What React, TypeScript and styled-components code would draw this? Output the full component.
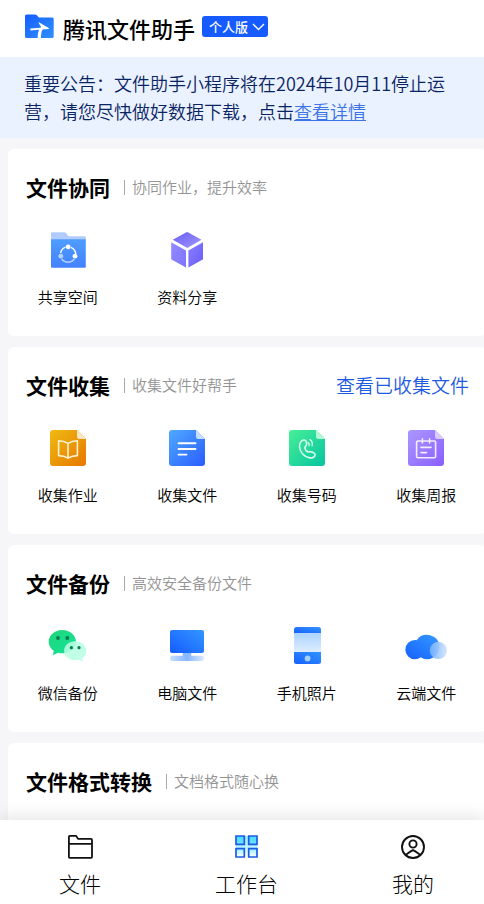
import React from 'react';
import styled, { createGlobalStyle } from 'styled-components';

const GlobalStyle = createGlobalStyle`
  * { box-sizing: border-box; }
  body {
    margin: 0;
    background: #f6f6f8;
    color: #000;
    font-family: "Noto Sans CJK SC", "Noto Sans", sans-serif;
    font-weight: 300;
  }
  button { font: inherit; color: inherit; border: 0; padding: 0; background: none; cursor: pointer; }
  svg { display: block; flex: none; }
`;

const Page = styled.div`
  display: flex;
  flex-direction: column;
  height: 100vh;
  overflow: hidden;
`;

const Header = styled.header`
  display: flex;
  align-items: center;
  height: 57px;
  padding: 0 24px 4px;
  background: #fff;
`;

const Brand = styled.h1`
  margin: 0 7px 0 8px;
  font-size: 22px;
  line-height: 32px;
  font-weight: 500;
  padding-top: 2px;
`;

const EditionButton = styled.button`
  && {
    display: flex;
    align-items: center;
    gap: 4px;
    height: 21px;
    padding: 0 3px 0 7px;
    border-radius: 3px;
    background: #155bff;
    color: #fff;
    font-size: 13px;
    line-height: 19px;
    font-weight: 500;
  }
`;

const Notice = styled.p`
  margin: 0;
  padding: 12px 24px 13px;
  background: #eaf2ff;
  color: #0a2463;
  font-size: 18px;
  line-height: 28px;
  font-weight: 350;
`;

const NoticeLink = styled.a`
  color: #3d73e6;
  text-decoration: underline;
`;

const Content = styled.main`
  flex: 1;
  min-height: 0;
  overflow: hidden auto;
  scrollbar-width: none;
  display: flex;
  flex-direction: column;
  gap: 11px;
  padding: 11px 0 11px 8px;
`;

const Card = styled.section`
  flex: none;
  min-height: 187px;
  margin-right: -2px;
  padding: 23px 0 29px;
  border-radius: 6px;
  background: #fff;
`;

const CardHead = styled.div`
  display: flex;
  align-items: center;
  height: 30px;
  padding: 0 17px 0 18px;
`;

const CardTitle = styled.h2`
  margin: 0;
  font-size: 21px;
  line-height: 30px;
  font-weight: 700;
`;

const CardHint = styled.span`
  display: flex;
  align-items: center;
  gap: 7px;
  margin-left: 14px;
  color: #949494;
  font-size: 15px;
  line-height: 24px;
  font-weight: 350;
  &::before {
    content: "";
    width: 1px;
    height: 15px;
    background: #aaa;
  }
`;

const HeadLink = styled.a`
  margin-left: auto;
  color: #1f5be0;
  font-size: 19px;
  line-height: 28px;
  font-weight: 350;
  text-decoration: none;
`;

const Grid = styled.div`
  display: grid;
  grid-template-columns: repeat(4, 1fr);
  margin-top: 26px;
`;

const Item = styled.button`
  display: flex;
  flex-direction: column;
  align-items: center;
  gap: 15px;
`;

const ItemLabel = styled.span`
  font-size: 15px;
  line-height: 20px;
  font-weight: 350;
`;

const TabBar = styled.nav`
  position: relative;
  display: flex;
  justify-content: space-between;
  padding: 13px 50px 7px 59px;
  background: #fff;
  box-shadow: 0 -4px 16px rgba(0, 0, 0, 0.1);
`;

const Tab = styled.button`
  display: flex;
  flex-direction: column;
  align-items: center;
  gap: 8px;
`;

const TabLabel = styled.span`
  font-size: 21px;
  line-height: 28px;
`;

type Stop = [string, string];

function Gradient({ id, stops, flip }: { id: string; stops: Stop; flip?: boolean }) {
  return (
    <linearGradient id={id} x1="0" y1={flip ? '1' : '0'} x2="1" y2={flip ? '0' : '1'}>
      <stop stopColor={stops[0]} />
      <stop offset="1" stopColor={stops[1]} />
    </linearGradient>
  );
}

function Icon({ children }: { children: React.ReactNode }) {
  return (
    <svg width="44" height="44" viewBox="0 0 44 44" fill="none" aria-hidden="true">
      {children}
    </svg>
  );
}

function SharedSpaceIcon() {
  return (
    <Icon>
      <defs>
        <linearGradient id="space" x1="0" y1="0" x2="0" y2="1">
          <stop stopColor="#4f9dff" />
          <stop offset="1" stopColor="#4382ff" />
        </linearGradient>
      </defs>
      <path d="M5 5.3a1 1 0 0 1 1-1h12.500a2 2 0 0 1 1.500.7l2.500 3.300h16.300a1 1 0 0 1 1 1V14H5z" fill="#b2ccff" />
      <path d="M5 11.300h34.800v27.400a1 1 0 0 1-1 1H6a1 1 0 0 1-1-1z" fill="url(#space)" />
      <path d="M14.600 25a8 8 0 0 1 4.900-5.800M24.900 19.300a8 8 0 0 1 4.900 6.800" stroke="#fff" strokeWidth="1.400" />
      <path d="M15.600 31a8 8 0 0 0 12.800 0" stroke="#fff" strokeOpacity=".6" strokeWidth="1.400" />
      <circle cx="22.200" cy="18.800" r="2.400" fill="#fff" />
      <circle cx="29" cy="28.200" r="2.400" fill="#fff" />
      <circle cx="14.800" cy="28.200" r="2.400" fill="#fff" fillOpacity=".6" />
    </Icon>
  );
}

function CubeIcon() {
  return (
    <Icon>
      <defs>
        <Gradient id="cubeTop" stops={['#655cf2', '#a398ff']} />
        <Gradient id="cubeLeft" stops={['#928aff', '#7f74ff']} />
        <Gradient id="cubeRight" stops={['#8a7fff', '#6a5cf8']} />
      </defs>
      <path d="M21.400 4.300a1.400 1.400 0 0 1 1.400 0l13.700 7.500-14.200 8.100-14.500-8.100z" fill="url(#cubeTop)" />
      <path d="M6.200 14.200 21 22.400v17L6.900 31.800a1.300 1.300 0 0 1-.7-1.100z" fill="url(#cubeLeft)" />
      <path d="m38 14.200-14.600 8.200v17l13.900-7.600a1.300 1.300 0 0 0 .7-1.100z" fill="url(#cubeRight)" />
    </Icon>
  );
}

function SheetIcon({ id, stops, fold, children }: { id: string; stops: Stop; fold: string; children: React.ReactNode }) {
  return (
    <Icon>
      <defs>
        <Gradient id={id} stops={stops} />
      </defs>
      <path d="M7 4h24l9 9v24a3 3 0 0 1-3 3H7a3 3 0 0 1-3-3V7a3 3 0 0 1 3-3z" fill={`url(#${id})`} />
      <path d="M31 4l9 9h-6.500a2.500 2.500 0 0 1-2.500-2.500z" fill={fold} />
      {children}
    </Icon>
  );
}

function HomeworkIcon() {
  return (
    <SheetIcon id="homework" stops={['#efbb12', '#e67700']} fold="#fbe6c4">
      <path
        d="M22 17.400c-2.800-1.800-6-2.500-9.400-2.600v14.800c3.500 0 6.600.8 9.400 2.600 2.800-1.800 6-2.600 9.400-2.600V14.800c-3.400.1-6.600.8-9.400 2.600zm0 0v14.600"
        stroke="#fff2cf"
        strokeWidth="1.600"
        strokeLinejoin="round"
      />
    </SheetIcon>
  );
}

function CollectFileIcon() {
  return (
    <SheetIcon id="collectFile" stops={['#4faaff', '#2a5cff']} fold="#c4dfff">
      <path d="M13.500 17.300h17M13.500 23h17M13.500 28.600h8" stroke="#fff" strokeWidth="1.900" strokeLinecap="round" />
    </SheetIcon>
  );
}

function NumberIcon() {
  return (
    <SheetIcon id="number" stops={['#46f096', '#08c3a0']} fold="#b5f8d5">
      <path
        d="M19.600 14c1.700.4 2.400 3 1.700 5.300-.3 1-1.500 1.500-1.400 2.500.2 1.700 1.500 3.200 2.900 4 1 .6 1.900-.3 2.900-.1 2.100.4 4.300 1.500 4.400 3.100.1 2-2.700 3.400-5.200 3.100-5.400-.7-9.900-5.300-10.400-11.200-.3-3.400 2-7.300 5.100-6.700z"
        stroke="#d8fff0"
        strokeWidth="1.600"
      />
      <path d="M22.900 16.600c1.100.6 1.500 1.800 1.300 3.100M25 13.600c2 1.300 2.700 3.600 2.100 6" stroke="#d8fff0" strokeWidth="1.300" strokeLinecap="round" />
    </SheetIcon>
  );
}

function WeeklyIcon() {
  return (
    <SheetIcon id="weekly" stops={['#ab98ff', '#8a5eff']} fold="#dccbff">
      <rect x="12.600" y="15" width="19" height="16.800" rx="1.200" stroke="#f2ecff" strokeWidth="1.600" />
      <path d="M18.400 12.800v4.200M25.600 12.800v4.200M17 21.400h10M17 26.600h5.500" stroke="#f2ecff" strokeWidth="1.600" strokeLinecap="round" />
    </SheetIcon>
  );
}

function ChatIcon() {
  return (
    <Icon>
      <defs>
        <Gradient id="chatBack" stops={['#1ed67a', '#16e39a']} />
      </defs>
      <path d="M16.300 6C8.700 6 2.700 11.200 2.700 17.800c0 3.700 1.900 6.800 5 9L7 31.200l5-2.500c1.400.4 2.800.6 4.300.6 7.600 0 13.700-5 13.700-11.500S23.900 6 16.300 6z" fill="url(#chatBack)" />
      <path d="M29.200 17.200c-6.200 0-11.100 4.200-11.100 9.500s4.900 9.600 11.100 9.600c1.400 0 2.700-.2 3.900-.5l3.700 1.900-.6-3.500c2.600-1.800 4.200-4.500 4.200-7.500 0-5.300-5-9.500-11.200-9.500z" fill="#b8ffe4" fillOpacity=".88" />
      <circle cx="12" cy="14" r="1.900" fill="#087a4c" />
      <circle cx="21.300" cy="14" r="1.900" fill="#087a4c" />
      <circle cx="25.400" cy="23.700" r="1.600" fill="#087a4c" />
      <circle cx="33" cy="23.700" r="1.600" fill="#087a4c" />
    </Icon>
  );
}

function ComputerIcon() {
  return (
    <Icon>
      <defs>
        <Gradient id="screen" stops={['#155cff', '#3396ff']} flip />
        <linearGradient id="stand" x1="0" y1="0" x2="1" y2="0">
          <stop stopColor="#c9deff" />
          <stop offset=".5" stopColor="#86b6ff" />
          <stop offset="1" stopColor="#dbe9ff" />
        </linearGradient>
      </defs>
      <path d="M17.700 28h8.500v5h-8.500z" fill="#8bb8ff" />
      <rect x="5" y="31.700" width="34" height="5.400" rx="2.300" fill="url(#stand)" />
      <rect x="5" y="6" width="34" height="23" rx="2" fill="url(#screen)" />
    </Icon>
  );
}

function MobileIcon() {
  return (
    <Icon>
      <defs>
        <Gradient id="mobile" stops={['#1660ff', '#3294ff']} flip />
        <linearGradient id="mobileScreen" x1="0" y1="0" x2="0" y2="1">
          <stop stopColor="#acd3ff" />
          <stop offset="1" stopColor="#deedff" />
        </linearGradient>
      </defs>
      <path d="M9 9.300V5.500A2.500 2.500 0 0 1 11.500 3h22A2.500 2.500 0 0 1 36 5.500v3.800z" fill="url(#mobile)" />
      <path d="M9 9.300h27V28H9z" fill="url(#mobileScreen)" />
      <path d="M9 28h27v9.500a2.500 2.500 0 0 1-2.500 2.500h-22A2.500 2.500 0 0 1 9 37.500z" fill="url(#mobile)" />
      <circle cx="22.600" cy="34.400" r="2.900" fill="#a5cfff" />
    </Icon>
  );
}

function CloudIcon() {
  return (
    <Icon>
      <defs>
        <Gradient id="cloud" stops={['#1760ff', '#349aff']} flip />
        <linearGradient id="cloudPuff" x1="0" y1="0" x2="1" y2="0">
          <stop stopColor="#74b0ff" />
          <stop offset="1" stopColor="#cfe4ff" />
        </linearGradient>
      </defs>
      <path d="M11 16c.5 0 1.100.1 1.600.2A12.800 12.800 0 0 1 35.600 22c0 7.200-5.500 13.300-12.600 13.300-2.300 0-4.500-.7-6.200-2-1.600 1.300-3.600 2-5.800 2a9.600 9.600 0 0 1 0-19.300z" fill="url(#cloud)" />
      <circle cx="34.400" cy="26.400" r="8.600" fill="url(#cloudPuff)" fillOpacity=".9" />
    </Icon>
  );
}

function LogoIcon() {
  return (
    <svg width="31" height="25" viewBox="0 0 31 25" aria-hidden="true">
      <defs>
        <Gradient id="logo" stops={['#155bff', '#2f92ff']} />
      </defs>
      <path d="M1 2a1.500 1.500 0 0 1 1.500-1.500h8.700a2 2 0 0 1 1.400.6l2.400 2.400h13.200A1.500 1.500 0 0 1 29.700 5v17.500a1.500 1.500 0 0 1-1.500 1.500H2.500A1.500 1.500 0 0 1 1 22.500z" fill="url(#logo)" />
      <path d="M15.300 8.400 24.700 14c.5.300.3 1-.3 1.100l-5.700.4c-1.200 1.900-1.700 4.500-1.700 8.500h-3.300c0-3.500.4-6 1.400-8.200l-8.700.6v-1.900l9.700-.7c.8-.3 1-.8.800-1.300l-2.100-3.200c-.4-.6 0-1.100.5-.9z" fill="#fff" />
    </svg>
  );
}

function FilesTabIcon() {
  return (
    <svg width="28" height="28" viewBox="0 0 28 28" fill="none" stroke="#111" strokeWidth="1.800" strokeLinejoin="round" aria-hidden="true">
      <path d="M2.900 24.100V3.900a1 1 0 0 1 1-1h6.300l1.800 3h13a1 1 0 0 1 1 1v17.200a.8.8 0 0 1-.8.800H3.700a.8.8 0 0 1-.8-.8zM2.900 10.900h23" />
    </svg>
  );
}

function WorkbenchTabIcon() {
  return (
    <svg width="28" height="28" viewBox="0 0 28 28" aria-hidden="true">
      <defs>
        <linearGradient id="bench" x1="0" y1="0" x2="0" y2="1">
          <stop stopColor="#49d9ff" />
          <stop offset=".5" stopColor="#7de8ff" />
          <stop offset="1" stopColor="#fff" />
        </linearGradient>
      </defs>
      <path d="M3 3h21v21H3z" fill="url(#bench)" />
      <path d="M12.100 2h2.800v24h-2.800zM2 12.300h24v2.400H2z" fill="#fff" fillOpacity=".5" />
      <path d="M3 3h8.300v8.300H3zM15.700 3H24v8.300h-8.300zM3 15.700h8.300V24H3zM15.700 15.700H24V24h-8.300z" fill="none" stroke="#1c5ce6" strokeWidth="1.700" />
    </svg>
  );
}

function ProfileTabIcon() {
  return (
    <svg width="28" height="28" viewBox="0 0 28 28" fill="none" stroke="#111" strokeWidth="1.900" aria-hidden="true">
      <circle cx="14" cy="14" r="11" />
      <circle cx="14" cy="11" r="3.600" />
      <path d="M6.500 21.900c2.800-1.900 5.200-3.700 7.500-4.800 2.300 1.100 4.700 2.900 7.500 4.800" />
    </svg>
  );
}

interface Section {
  title: string;
  hint: string;
  link?: string;
  items: { label: string; icon: React.ReactNode }[];
}

const sections: Section[] = [
  {
    title: '文件协同',
    hint: '协同作业，提升效率',
    items: [
      { label: '共享空间', icon: <SharedSpaceIcon /> },
      { label: '资料分享', icon: <CubeIcon /> },
    ],
  },
  {
    title: '文件收集',
    hint: '收集文件好帮手',
    link: '查看已收集文件',
    items: [
      { label: '收集作业', icon: <HomeworkIcon /> },
      { label: '收集文件', icon: <CollectFileIcon /> },
      { label: '收集号码', icon: <NumberIcon /> },
      { label: '收集周报', icon: <WeeklyIcon /> },
    ],
  },
  {
    title: '文件备份',
    hint: '高效安全备份文件',
    items: [
      { label: '微信备份', icon: <ChatIcon /> },
      { label: '电脑文件', icon: <ComputerIcon /> },
      { label: '手机照片', icon: <MobileIcon /> },
      { label: '云端文件', icon: <CloudIcon /> },
    ],
  },
  { title: '文件格式转换', hint: '文档格式随心换', items: [] },
];

const tabs = [
  { label: '文件', icon: <FilesTabIcon /> },
  { label: '工作台', icon: <WorkbenchTabIcon />, current: true },
  { label: '我的', icon: <ProfileTabIcon /> },
];

export default function App() {
  return (
    <Page lang="zh-CN">
      <GlobalStyle />
      <Header>
        <LogoIcon />
        <Brand>腾讯文件助手</Brand>
        <EditionButton type="button">
          个人版
          <svg width="13" height="8" viewBox="0 0 13 8" fill="none" stroke="#fff" strokeWidth="1.400" aria-hidden="true">
            <path d="M1 1l5.500 5.500L12 1" />
          </svg>
        </EditionButton>
      </Header>
      <Notice>
        重要公告：文件助手小程序将在2024年10月11停止运营，请您尽快做好数据下载，点击
        <NoticeLink href="#notice">查看详情</NoticeLink>
      </Notice>
      <Content>
        {sections.map((section) => (
          <Card key={section.title}>
            <CardHead>
              <CardTitle>{section.title}</CardTitle>
              <CardHint>{section.hint}</CardHint>
              {section.link && <HeadLink href="#collected">{section.link}</HeadLink>}
            </CardHead>
            <Grid>
              {section.items.map((item) => (
                <Item key={item.label} type="button">
                  {item.icon}
                  <ItemLabel>{item.label}</ItemLabel>
                </Item>
              ))}
            </Grid>
          </Card>
        ))}
      </Content>
      <TabBar>
        {tabs.map((tab) => (
          <Tab key={tab.label} type="button" aria-current={tab.current ? 'page' : undefined}>
            {tab.icon}
            <TabLabel>{tab.label}</TabLabel>
          </Tab>
        ))}
      </TabBar>
    </Page>
  );
}
